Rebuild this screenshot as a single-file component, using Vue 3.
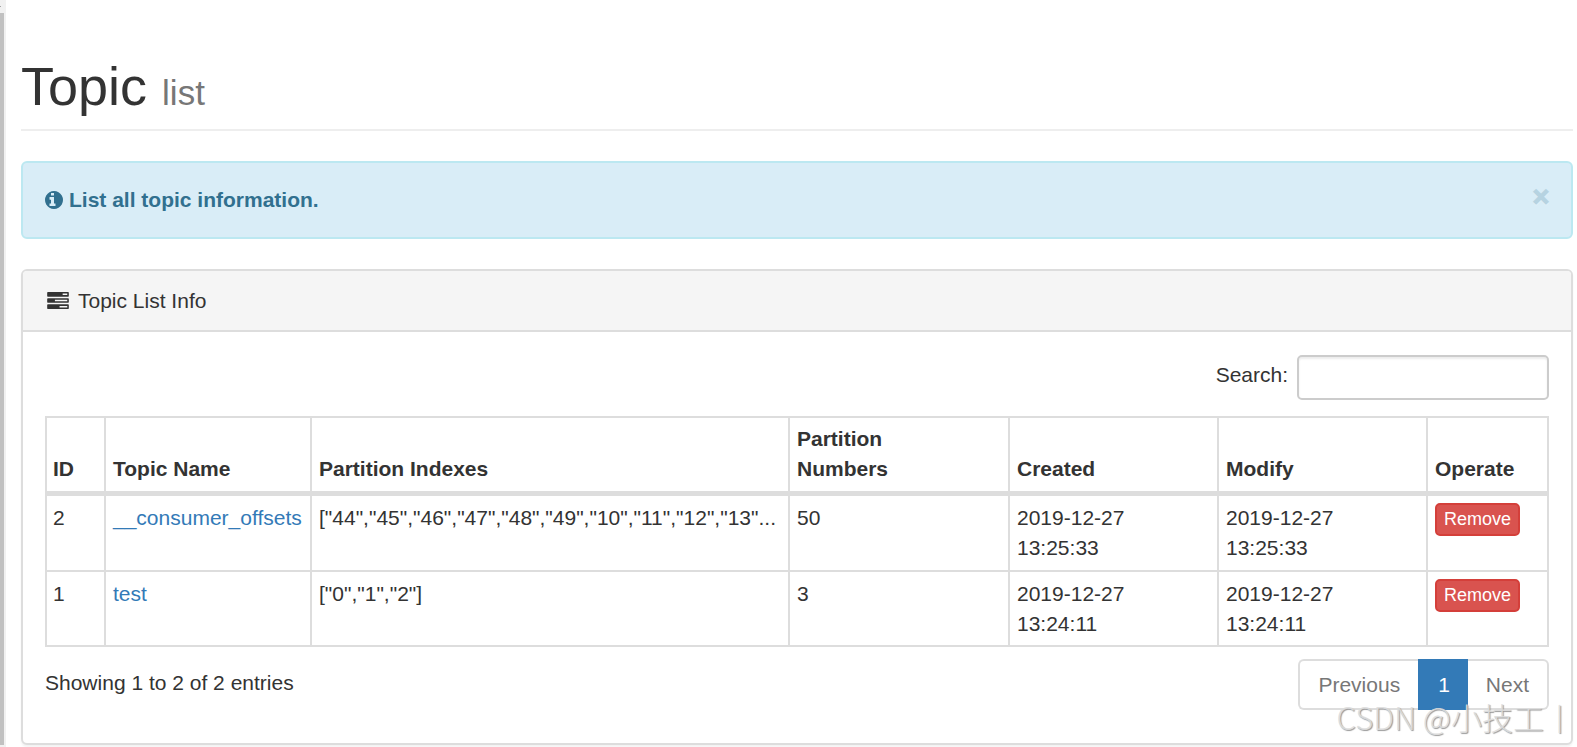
<script setup>
import { ref, computed } from 'vue'

const query = ref('')
const showAlert = ref(true)

const topics = ref([
  {
    id: 2,
    name: '__consumer_offsets',
    indexes: '["44","45","46","47","48","49","10","11","12","13"...',
    partitions: 50,
    created: '2019-12-27 13:25:33',
    modified: '2019-12-27 13:25:33',
  },
  {
    id: 1,
    name: 'test',
    indexes: '["0","1","2"]',
    partitions: 3,
    created: '2019-12-27 13:24:11',
    modified: '2019-12-27 13:24:11',
  },
])

const visible = computed(() => topics.value.filter((t) => t.name.includes(query.value)))

function remove(topic) {
  topics.value = topics.value.filter((t) => t !== topic)
}
</script>

<template>
  <div class="page">
    <div class="scrollbar" aria-hidden="true">
      <div class="scroll-arrow"></div>
      <div class="scroll-thumb"></div>
    </div>

    <main class="content">
      <header class="page-header">
        <h1>Topic <small>list</small></h1>
      </header>

      <div v-if="showAlert" class="alert" role="alert">
        <svg class="info-icon" viewBox="128 128 1536 1536" aria-hidden="true">
          <path
            fill="currentColor"
            d="M1024 1376v-160q0-14-9-23t-23-9h-96v-512q0-14-9-23t-23-9h-320q-14 0-23 9t-9 23v160q0 14 9 23t23 9h96v320h-96q-14 0-23 9t-9 23v160q0 14 9 23t23 9h448q14 0 23-9t9-23zM896 480v-160q0-14-9-23t-23-9h-192q-14 0-23 9t-9 23v160q0 14 9 23t23 9h192q14 0 23-9t9-23zM1664 896q0 209-103 385.5t-279.5 279.5-385.5 103-385.5-103-279.5-279.5-103-385.5 103-385.5 279.5-279.5 385.5-103 385.5 103 279.5 279.5 103 385.5z"
          />
        </svg>
        <strong>List all topic information.</strong>
        <button class="close" type="button" aria-label="Close" @click="showAlert = false">×</button>
      </div>

      <section class="panel">
        <div class="panel-heading">
          <svg class="tasks-icon" viewBox="0 128 1792 1408" aria-hidden="true">
            <path
              fill="currentColor"
              d="M1024 1408h640v-128h-640v128zM640 896h1024v-128h-1024v128zM1280 384h384v-128h-384v128zM1792 1216v256q0 26-19 45t-45 19h-1664q-26 0-45-19t-19-45v-256q0-26 19-45t45-19h1664q26 0 45 19t19 45zM1792 704v256q0 26-19 45t-45 19h-1664q-26 0-45-19t-19-45v-256q0-26 19-45t45-19h1664q26 0 45 19t19 45zM1792 192v256q0 26-19 45t-45 19h-1664q-26 0-45-19t-19-45v-256q0-26 19-45t45-19h1664q26 0 45 19t19 45z"
            />
          </svg>
          <span>Topic List Info</span>
        </div>

        <div class="panel-body">
          <div class="filter">
            <label for="topic-search">Search:</label>
            <input id="topic-search" v-model="query" type="search" />
          </div>

          <table>
            <colgroup>
              <col class="c-id" />
              <col class="c-name" />
              <col />
              <col class="c-count" />
              <col class="c-date" />
              <col class="c-date" />
              <col class="c-action" />
            </colgroup>
            <thead>
              <tr>
                <th scope="col">ID</th>
                <th scope="col">Topic Name</th>
                <th scope="col">Partition Indexes</th>
                <th scope="col">Partition<br />Numbers</th>
                <th scope="col">Created</th>
                <th scope="col">Modify</th>
                <th scope="col">Operate</th>
              </tr>
            </thead>
            <tbody>
              <tr v-for="t in visible" :key="t.id">
                <td>{{ t.id }}</td>
                <td><a href="#">{{ t.name }}</a></td>
                <td>{{ t.indexes }}</td>
                <td>{{ t.partitions }}</td>
                <td class="date">{{ t.created }}</td>
                <td class="date">{{ t.modified }}</td>
                <td><button class="remove" type="button" @click="remove(t)">Remove</button></td>
              </tr>
            </tbody>
          </table>

          <div class="table-footer">
            <div class="info">Showing 1 to {{ visible.length }} of {{ topics.length }} entries</div>
            <nav class="pagination" aria-label="Pages">
              <a href="#" class="prev">Previous</a>
              <a href="#" class="active" aria-current="page">1</a>
              <a href="#" class="next">Next</a>
            </nav>
          </div>
        </div>
      </section>
    </main>

    <div class="watermark">CSDN @小技工丨</div>
  </div>
</template>

<style>
body {
  margin: 0;
  background: #fff;
}
</style>

<style scoped>
* {
  box-sizing: border-box;
}
.page {
  position: relative;
  display: flex;
  min-height: 100vh;
  overflow: hidden;
  font-family: "Liberation Sans", Arial, "Noto Sans CJK SC", sans-serif;
  font-size: 21px;
  line-height: 30px;
  color: #333;
}
.scrollbar {
  display: flex;
  flex-direction: column;
  flex: none;
  width: 6px;
  padding-bottom: 2px;
  background: #f1f1f1;
}
.scroll-arrow {
  height: 13px;
  padding-top: 6px;
}
.scroll-arrow::before {
  content: "";
  display: block;
  width: 1px;
  height: 1px;
  background: #a3a3a3;
}
.scroll-thumb {
  flex: 1;
  width: 4px;
  background: #c1c1c1;
}
.content {
  flex: 1;
  min-width: 0;
  padding: 56px 4px 2px 15px;
}
.page-header {
  margin-bottom: 30px;
  padding-bottom: 13px;
  border-bottom: 2px solid #eee;
}
h1 {
  margin: 0;
  font-size: 54px;
  line-height: 60px;
  font-weight: 400;
}
h1 small {
  font-size: 35px;
  line-height: 1;
  color: #777;
}
.alert {
  display: flex;
  align-items: center;
  gap: 6px;
  margin-bottom: 30px;
  padding: 22px 21px 22px 22px;
  border: 2px solid #bce8f1;
  border-radius: 6px;
  background: #d9edf7;
  color: #31708f;
}
.info-icon {
  flex: none;
  width: 18px;
  height: 18px;
}
.close {
  align-self: flex-start;
  height: 22px;
  margin-left: auto;
  padding: 0;
  border: 0;
  background: none;
  color: inherit;
  font-family: Roboto, "Liberation Sans", sans-serif;
  font-size: 34px;
  font-weight: 900;
  line-height: 22px;
  text-shadow: 0 1px 0 #fff;
  opacity: 0.2;
  cursor: pointer;
}
.panel {
  border: 2px solid #ddd;
  border-radius: 6px;
  background: #fff;
  box-shadow: 0 2px 2px rgba(0, 0, 0, 0.05);
}
.panel-heading {
  display: flex;
  align-items: center;
  gap: 9px;
  padding: 15px 24px 14px;
  border-bottom: 2px solid #ddd;
  border-radius: 4px 4px 0 0;
  background: #f5f5f5;
}
.tasks-icon {
  flex: none;
  width: 22px;
  height: 17px;
  margin-bottom: 2px;
}
.panel-body {
  padding: 23px 22px 33px;
}
.filter {
  display: flex;
  align-items: center;
  justify-content: flex-end;
  gap: 9px;
  margin-bottom: 16px;
}
.filter label {
  padding-bottom: 5px;
}
.filter input {
  width: 252px;
  height: 45px;
  padding: 7px 14px;
  border: 2px solid #ccc;
  border-radius: 5px;
  background: #fff;
  box-shadow: inset 0 2px 2px rgba(0, 0, 0, 0.075);
  color: #555;
  font: inherit;
  font-size: 18px;
  appearance: none;
}
table {
  width: 100%;
  table-layout: fixed;
  border: 0 solid #ddd;
  border-width: 2px 0 0 2px;
  border-collapse: separate;
  border-spacing: 0;
}
.c-id {
  width: 59px;
}
.c-name {
  width: 206px;
}
.c-count {
  width: 220px;
}
.c-date {
  width: 209px;
}
.c-action {
  width: 121px;
}
th,
td {
  padding: 7px;
  border: 0 solid #ddd;
  border-width: 0 2px 2px 0;
  text-align: left;
  vertical-align: top;
}
th {
  padding-top: 6px;
  border-bottom-width: 5px;
  font-weight: 700;
  vertical-align: bottom;
}
th:first-child,
td:first-child {
  padding-left: 6px;
}
td {
  white-space: nowrap;
}
tr:last-child td {
  padding-bottom: 6px;
}
td.date {
  padding-right: 60px;
  white-space: normal;
}
td a {
  color: #337ab7;
  text-decoration: none;
}
.remove {
  display: block;
  padding: 1px 7px;
  border: 2px solid #d43f3a;
  border-radius: 5px;
  background: #d9534f;
  color: #fff;
  font: inherit;
  font-size: 18px;
  line-height: 27px;
  cursor: pointer;
}
.table-footer {
  display: flex;
  align-items: flex-start;
  justify-content: space-between;
  padding-top: 12px;
}
.info {
  padding-top: 9px;
}
.pagination {
  display: flex;
}
.pagination a {
  padding: 9px 18px 8px;
  border: 2px solid #ddd;
  background: #fff;
  color: #777;
  text-decoration: none;
}
.pagination .prev {
  border-right: 0;
  border-radius: 6px 0 0 6px;
}
.pagination .active {
  border-color: #337ab7;
  border-right-width: 0;
  background: #337ab7;
  color: #fff;
}
.pagination .next {
  border-left: 0;
  border-radius: 0 6px 6px 0;
}
.watermark {
  position: absolute;
  right: 2px;
  bottom: 8px;
  color: rgba(222, 222, 222, 0.9);
  font-family: "Noto Sans CJK SC", sans-serif;
  font-size: 31px;
  font-weight: 300;
  line-height: 44px;
  text-shadow: 1px 1px 1px #999;
  pointer-events: none;
}
</style>
